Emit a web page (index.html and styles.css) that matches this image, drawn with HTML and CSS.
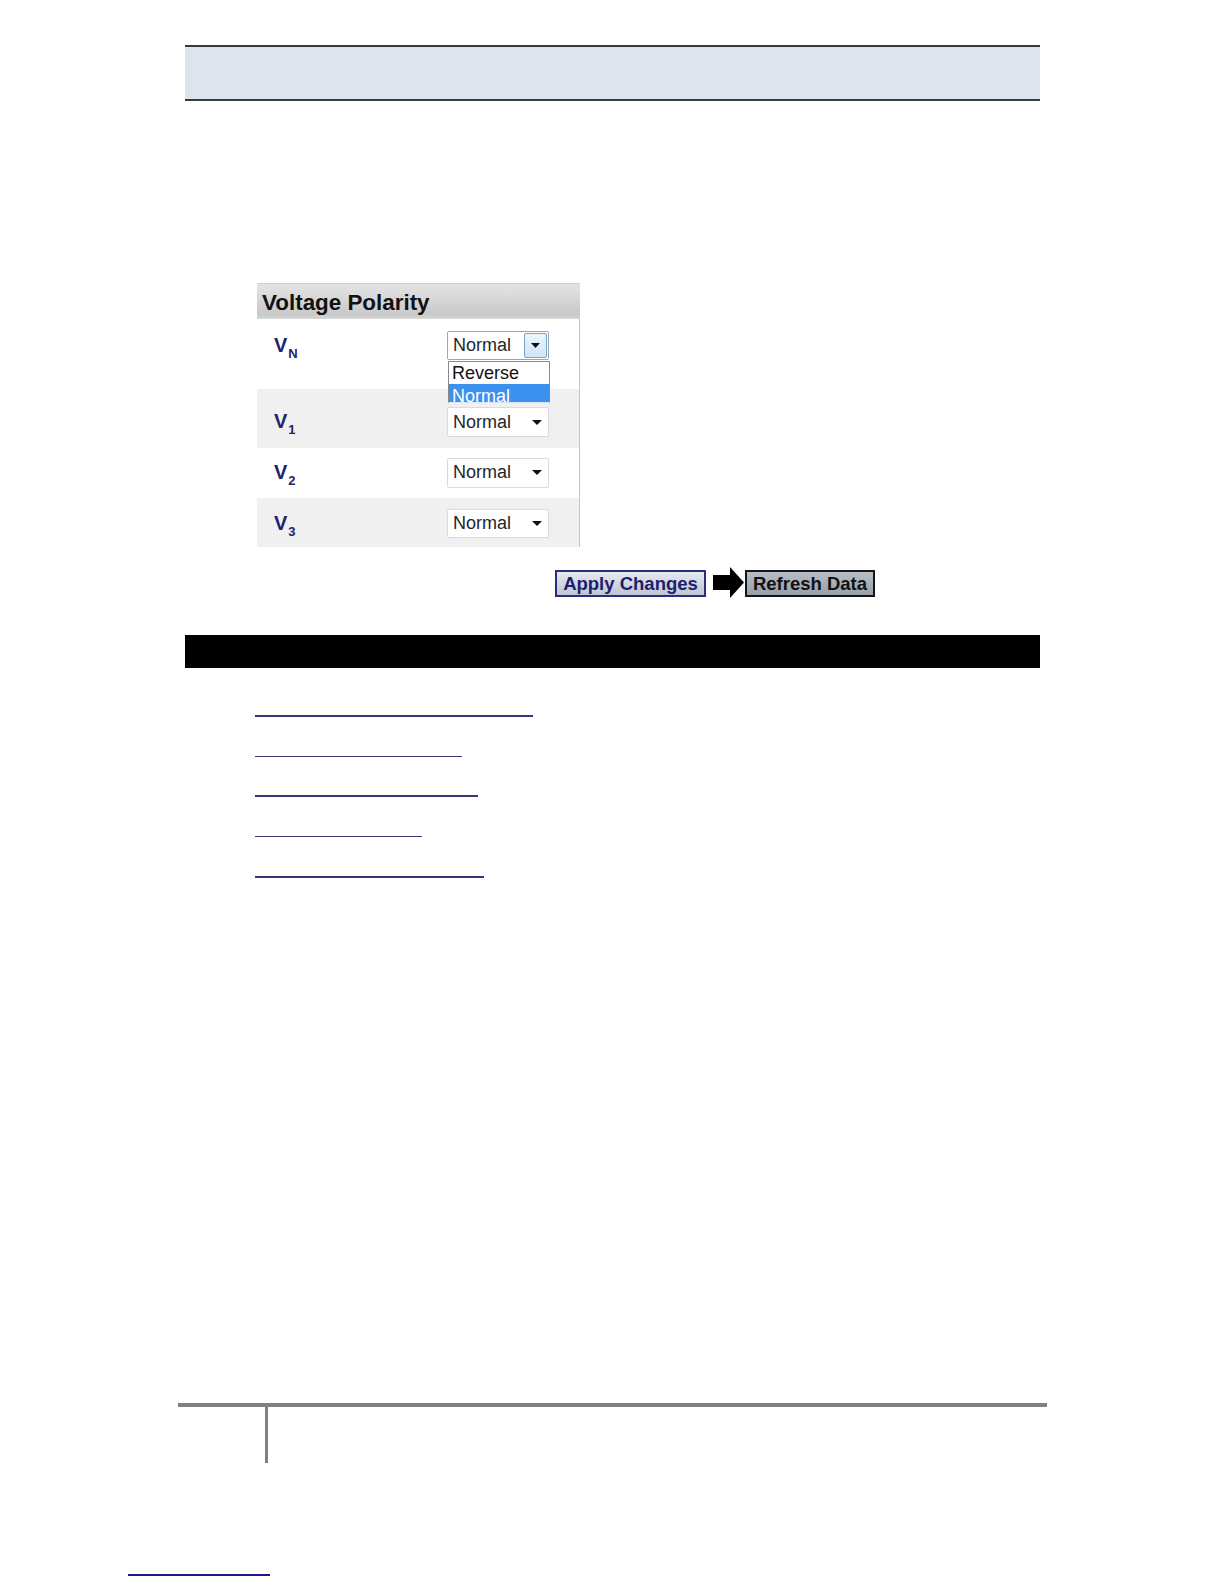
FILE: index.html
```html
<!DOCTYPE html>
<html>
<head>
<meta charset="utf-8">
<title>Voltage Polarity</title>
<link rel="stylesheet" href="styles.css">
</head>
<body>
<div class="page">
  <div class="topband"></div>

  <section class="panel">
    <div class="panel-head">Voltage Polarity</div>
    <div class="panel-body">
      <div class="row row-n">
        <div class="lbl">V<sub>N</sub></div>
        <div class="sel-wrap">
          <div class="sel sel-open">
            <span class="sel-text">Normal</span>
            <span class="sel-btn"><svg width="9" height="5" viewBox="0 0 9 5"><polygon points="0,0 9,0 4.5,5" fill="#111"/></svg></span>
          </div>
          <ul class="dropdown">
            <li>Reverse</li>
            <li class="hl">Normal</li>
          </ul>
        </div>
      </div>
      <div class="row row-1 alt">
        <div class="lbl">V<sub>1</sub></div>
        <div class="sel-wrap">
          <div class="sel">
            <span class="sel-text">Normal</span>
            <span class="sel-caret"><svg width="10" height="5" viewBox="0 0 10 5"><polygon points="0,0 10,0 5,5" fill="#111"/></svg></span>
          </div>
        </div>
      </div>
      <div class="row row-2">
        <div class="lbl">V<sub>2</sub></div>
        <div class="sel-wrap">
          <div class="sel">
            <span class="sel-text">Normal</span>
            <span class="sel-caret"><svg width="10" height="5" viewBox="0 0 10 5"><polygon points="0,0 10,0 5,5" fill="#111"/></svg></span>
          </div>
        </div>
      </div>
      <div class="row row-3 alt">
        <div class="lbl">V<sub>3</sub></div>
        <div class="sel-wrap">
          <div class="sel">
            <span class="sel-text">Normal</span>
            <span class="sel-caret"><svg width="10" height="5" viewBox="0 0 10 5"><polygon points="0,0 10,0 5,5" fill="#111"/></svg></span>
          </div>
        </div>
      </div>
    </div>
  </section>

  <div class="actions">
    <button class="btn-apply" type="button">Apply Changes</button>
    <svg class="arrow" width="31" height="31" viewBox="0 0 31 31"><polygon points="0,8 17,8 17,0 31,15.5 17,31 17,23 0,23" fill="#000"/></svg>
    <button class="btn-refresh" type="button">Refresh Data</button>
  </div>

  <div class="blackbar"></div>

  <div class="links">
    <a class="lnk lnk-1" href="#" aria-label="link 1"></a>
    <a class="lnk lnk-2 thin" href="#" aria-label="link 2"></a>
    <a class="lnk lnk-3" href="#" aria-label="link 3"></a>
    <a class="lnk lnk-4 thin" href="#" aria-label="link 4"></a>
    <a class="lnk lnk-5" href="#" aria-label="link 5"></a>
  </div>

  <div class="footer-rule"></div>
  <div class="footer-vrule"></div>

  <a class="bottom-link" href="#" aria-label="bottom link"></a>
</div>
</body>
</html>
```

FILE: styles.css
```css
html, body {
  margin: 0;
  padding: 0;
  background: #ffffff;
}

body {
  font-family: "Liberation Sans", Arial, sans-serif;
}

.page {
  padding-top: 45px;
  width: 1224px;
  box-sizing: border-box;
}

.topband {
  margin-left: 185px;
  width: 855px;
  height: 52px;
  background: #dce4f0;
  border-top: 2px solid #3a3a32;
  border-bottom: 2px solid #3a3a32;
}

.panel {
  margin-top: 182px;
  margin-left: 257px;
  width: 323px;
}

.panel-head {
  height: 35px;
  border-top: 1px solid #c9d3de;
  background: linear-gradient(#e4e4e4, #c9c9c9 88%, #d8d8d8);
  font-weight: bold;
  font-size: 22.4px;
  line-height: 38px;
  color: #111111;
  padding-left: 5px;
}

.panel-body {
  border-right: 1px solid #b3c6df;
}

.row {
  display: grid;
  grid-template-columns: 190px 102px;
  align-items: start;
  box-sizing: border-box;
  background: #ffffff;
}

.row.alt {
  background: #f0f0f0;
}

.row-n { height: 70px; padding-top: 11.5px; }
.row-1 { height: 59px; padding-top: 18.3px; }
.row-2 { height: 49.5px; padding-top: 10px; }
.row-3 { height: 49.5px; padding-top: 11px; }

.lbl {
  padding-left: 17px;
  padding-top: 3px;
  font-weight: bold;
  font-size: 20px;
  line-height: 22px;
  color: #22226c;
}

.lbl sub {
  font-size: 13px;
  vertical-align: -6px;
  line-height: 0;
  margin-left: 1px;
}

.sel-wrap {
  position: relative;
  width: 102px;
}

.sel {
  height: 29.5px;
  box-sizing: border-box;
  border: 1px solid #dadada;
  border-radius: 2px;
  background: #ffffff;
  display: flex;
  align-items: center;
  justify-content: space-between;
  font-size: 18px;
  color: #262626;
}

.sel-text {
  padding-left: 5px;
}

.sel-caret {
  display: flex;
  align-items: center;
  padding-right: 6px;
}

.sel-open {
  border-color: #8fa9c4;
}

.sel-btn {
  align-self: stretch;
  width: 21px;
  margin: 1px;
  border: 1px solid #7ea3c8;
  border-radius: 2px;
  background: linear-gradient(#eaf4fd, #cfe4f8);
  display: flex;
  align-items: center;
  justify-content: center;
}

.dropdown {
  position: absolute;
  left: 1px;
  top: 30.3px;
  width: 102px;
  height: 42.4px;
  margin: 0;
  padding: 0;
  list-style: none;
  box-sizing: border-box;
  border: 1px solid #8a8a8a;
  border-bottom-color: #d8e8f8;
  background: #ffffff;
  overflow: hidden;
  font-size: 18px;
  z-index: 2;
}

.dropdown li {
  height: 22.5px;
  line-height: 22px;
  padding-left: 3px;
  color: #111111;
}

.dropdown li.hl {
  height: 19px;
  line-height: 24px;
  background: #3d91ee;
  color: #ffffff;
  overflow: hidden;
}

.actions {
  display: flex;
  align-items: flex-end;
  margin-top: 20px;
  margin-left: 555px;
  height: 30.3px;
}

.btn-apply,
.btn-refresh {
  height: 27.5px;
  padding: 0;
  font-family: "Liberation Sans", Arial, sans-serif;
  font-weight: bold;
  font-size: 18.5px;
  line-height: 23px;
  box-sizing: border-box;
  cursor: pointer;
}

.btn-apply {
  width: 151px;
  border: 2px solid #2c2c7e;
  background: linear-gradient(#e6e9f0, #bfc5d2);
  color: #1e1e6e;
}

.arrow {
  display: block;
  margin-left: 7px;
  align-self: flex-start;
}

.btn-refresh {
  width: 130px;
  margin-left: 1px;
  border: 2px solid #151515;
  background: linear-gradient(#b7bec6, #979fa9);
  color: #111111;
}

.blackbar {
  margin-top: 37.4px;
  margin-left: 185px;
  width: 855px;
  height: 33.3px;
  background: #000000;
}

.links {
  margin-left: 255px;
  margin-top: 8.7px;
  display: flex;
  flex-direction: column;
  align-items: flex-start;
}

.lnk {
  display: block;
  height: 38.2px;
  border-bottom: 2px solid #363680;
}

.lnk.thin {
  height: 39.2px;
  border-bottom-width: 1px;
  border-bottom-color: #3a3a7c;
}

.lnk-1 { width: 278px; }
.lnk-2 { width: 207px; }
.lnk-3 { width: 223px; }
.lnk-4 { width: 167px; }
.lnk-5 { width: 229px; }

.footer-rule {
  margin-top: 525px;
  margin-left: 178px;
  width: 869px;
  height: 4px;
  background: #808080;
}

.footer-vrule {
  margin-left: 265px;
  width: 3px;
  height: 56px;
  background: #808080;
}

.bottom-link {
  display: block;
  margin-top: 111px;
  margin-left: 128px;
  width: 142px;
  height: 0;
  border-bottom: 2px solid #1a1a8c;
}
```
